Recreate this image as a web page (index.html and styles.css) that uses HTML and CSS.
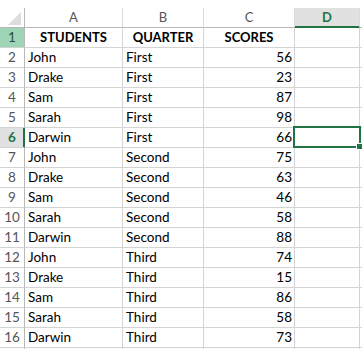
FILE: index.html
```
<!DOCTYPE html>
<html>
<head>
<meta charset="utf-8">
<link rel="stylesheet" href="styles.css">
</head>
<body>
<div class="sheet">
  <div class="corner"><span class="tri"></span></div>
  <div class="ch">A</div>
  <div class="ch">B</div>
  <div class="ch">C</div>
  <div class="ch ch-active">D</div>
  <div class="ch"></div>

  <div class="rh rh-green">1</div>
  <div class="c bold center">STUDENTS</div>
  <div class="c bold center">QUARTER</div>
  <div class="c bold center">SCORES</div>
  <div class="c"></div><div class="c"></div>

  <div class="rh">2</div><div class="c">John</div><div class="c">First</div><div class="c num">56</div><div class="c"></div><div class="c"></div>
  <div class="rh">3</div><div class="c">Drake</div><div class="c">First</div><div class="c num">23</div><div class="c"></div><div class="c"></div>
  <div class="rh">4</div><div class="c">Sam</div><div class="c">First</div><div class="c num">87</div><div class="c"></div><div class="c"></div>
  <div class="rh">5</div><div class="c">Sarah</div><div class="c">First</div><div class="c num">98</div><div class="c"></div><div class="c"></div>
  <div class="rh rh-active">6</div><div class="c">Darwin</div><div class="c">First</div><div class="c num">66</div><div class="c sel"><div class="selbox"></div></div><div class="c"></div>
  <div class="rh">7</div><div class="c">John</div><div class="c">Second</div><div class="c num">75</div><div class="c"></div><div class="c"></div>
  <div class="rh">8</div><div class="c">Drake</div><div class="c">Second</div><div class="c num">63</div><div class="c"></div><div class="c"></div>
  <div class="rh">9</div><div class="c">Sam</div><div class="c">Second</div><div class="c num">46</div><div class="c"></div><div class="c"></div>
  <div class="rh">10</div><div class="c">Sarah</div><div class="c">Second</div><div class="c num">58</div><div class="c"></div><div class="c"></div>
  <div class="rh">11</div><div class="c">Darwin</div><div class="c">Second</div><div class="c num">88</div><div class="c"></div><div class="c"></div>
  <div class="rh">12</div><div class="c">John</div><div class="c">Third</div><div class="c num">74</div><div class="c"></div><div class="c"></div>
  <div class="rh">13</div><div class="c">Drake</div><div class="c">Third</div><div class="c num">15</div><div class="c"></div><div class="c"></div>
  <div class="rh">14</div><div class="c">Sam</div><div class="c">Third</div><div class="c num">86</div><div class="c"></div><div class="c"></div>
  <div class="rh">15</div><div class="c">Sarah</div><div class="c">Third</div><div class="c num">58</div><div class="c"></div><div class="c"></div>
  <div class="rh">16</div><div class="c">Darwin</div><div class="c">Third</div><div class="c num">73</div><div class="c"></div><div class="c"></div>
  <div class="rh"></div><div class="c"></div><div class="c"></div><div class="c"></div><div class="c"></div><div class="c"></div>
</div>
</body>
</html>
```
FILE: styles.css
```
html, body {
  margin: 0;
  padding: 0;
  background: #ffffff;
}
body {
  width: 362px;
  height: 349px;
  overflow: hidden;
  font-family: Lato, "Liberation Sans", sans-serif;
}
.sheet {
  display: grid;
  grid-template-columns: 25px 98px 81px 91px 65px 1fr;
  grid-auto-rows: 20px;
  padding-top: 8px;
}
.sheet > div {
  box-sizing: border-box;
  border-right: 1px solid #d4d4d4;
  border-bottom: 1px solid #d4d4d4;
  line-height: 19px;
  white-space: nowrap;
  overflow: visible;
}
.corner {
  position: relative;
  border-right: 1px solid #b8b8b8 !important;
  border-bottom: 1px solid #b8b8b8 !important;
}
.tri {
  position: absolute;
  left: 8px;
  top: 4px;
  width: 0;
  height: 0;
  border-left: 13px solid transparent;
  border-bottom: 13px solid #dcdcdc;
}
.ch {
  font-size: 13px;
  color: #555555;
  text-align: center;
  border-right-color: #dadada !important;
  border-bottom: 1px solid #b8b8b8 !important;
}
.ch-active {
  background: #e1e1e1;
  color: #217346;
  font-weight: 700;
  border-bottom: 1px solid #217346 !important;
  box-shadow: inset 0 -1px 0 #217346;
}
.rh {
  font-size: 13.5px;
  color: #555555;
  text-align: center;
  border-right: 1px solid #b8b8b8 !important;
}
.rh-green {
  background: #9fd5b7;
  color: #2f4a3b;
}
.rh-active {
  background: #e1e1e1;
  color: #217346;
  font-weight: 700;
  border-right: 1px solid #217346 !important;
  box-shadow: inset -1px 0 0 #217346;
}
.c {
  font-size: 13.5px;
  color: #000000;
  padding-left: 3px;
}
.bold {
  font-weight: 700;
  font-size: 13px;
}
.center {
  text-align: center;
  padding-left: 0;
}
.num {
  text-align: right;
  padding-left: 0;
  padding-right: 2px;
}
.sel {
  position: relative;
}
.selbox {
  position: absolute;
  left: -2px;
  top: -2px;
  width: 68px;
  height: 22px;
  box-sizing: border-box;
  border: 2px solid #217346;
  z-index: 2;
}
.selbox::after {
  content: "";
  position: absolute;
  left: 61px;
  top: 15px;
  width: 5px;
  height: 5px;
  background: #217346;
  border: 1px solid #ffffff;
}
```
